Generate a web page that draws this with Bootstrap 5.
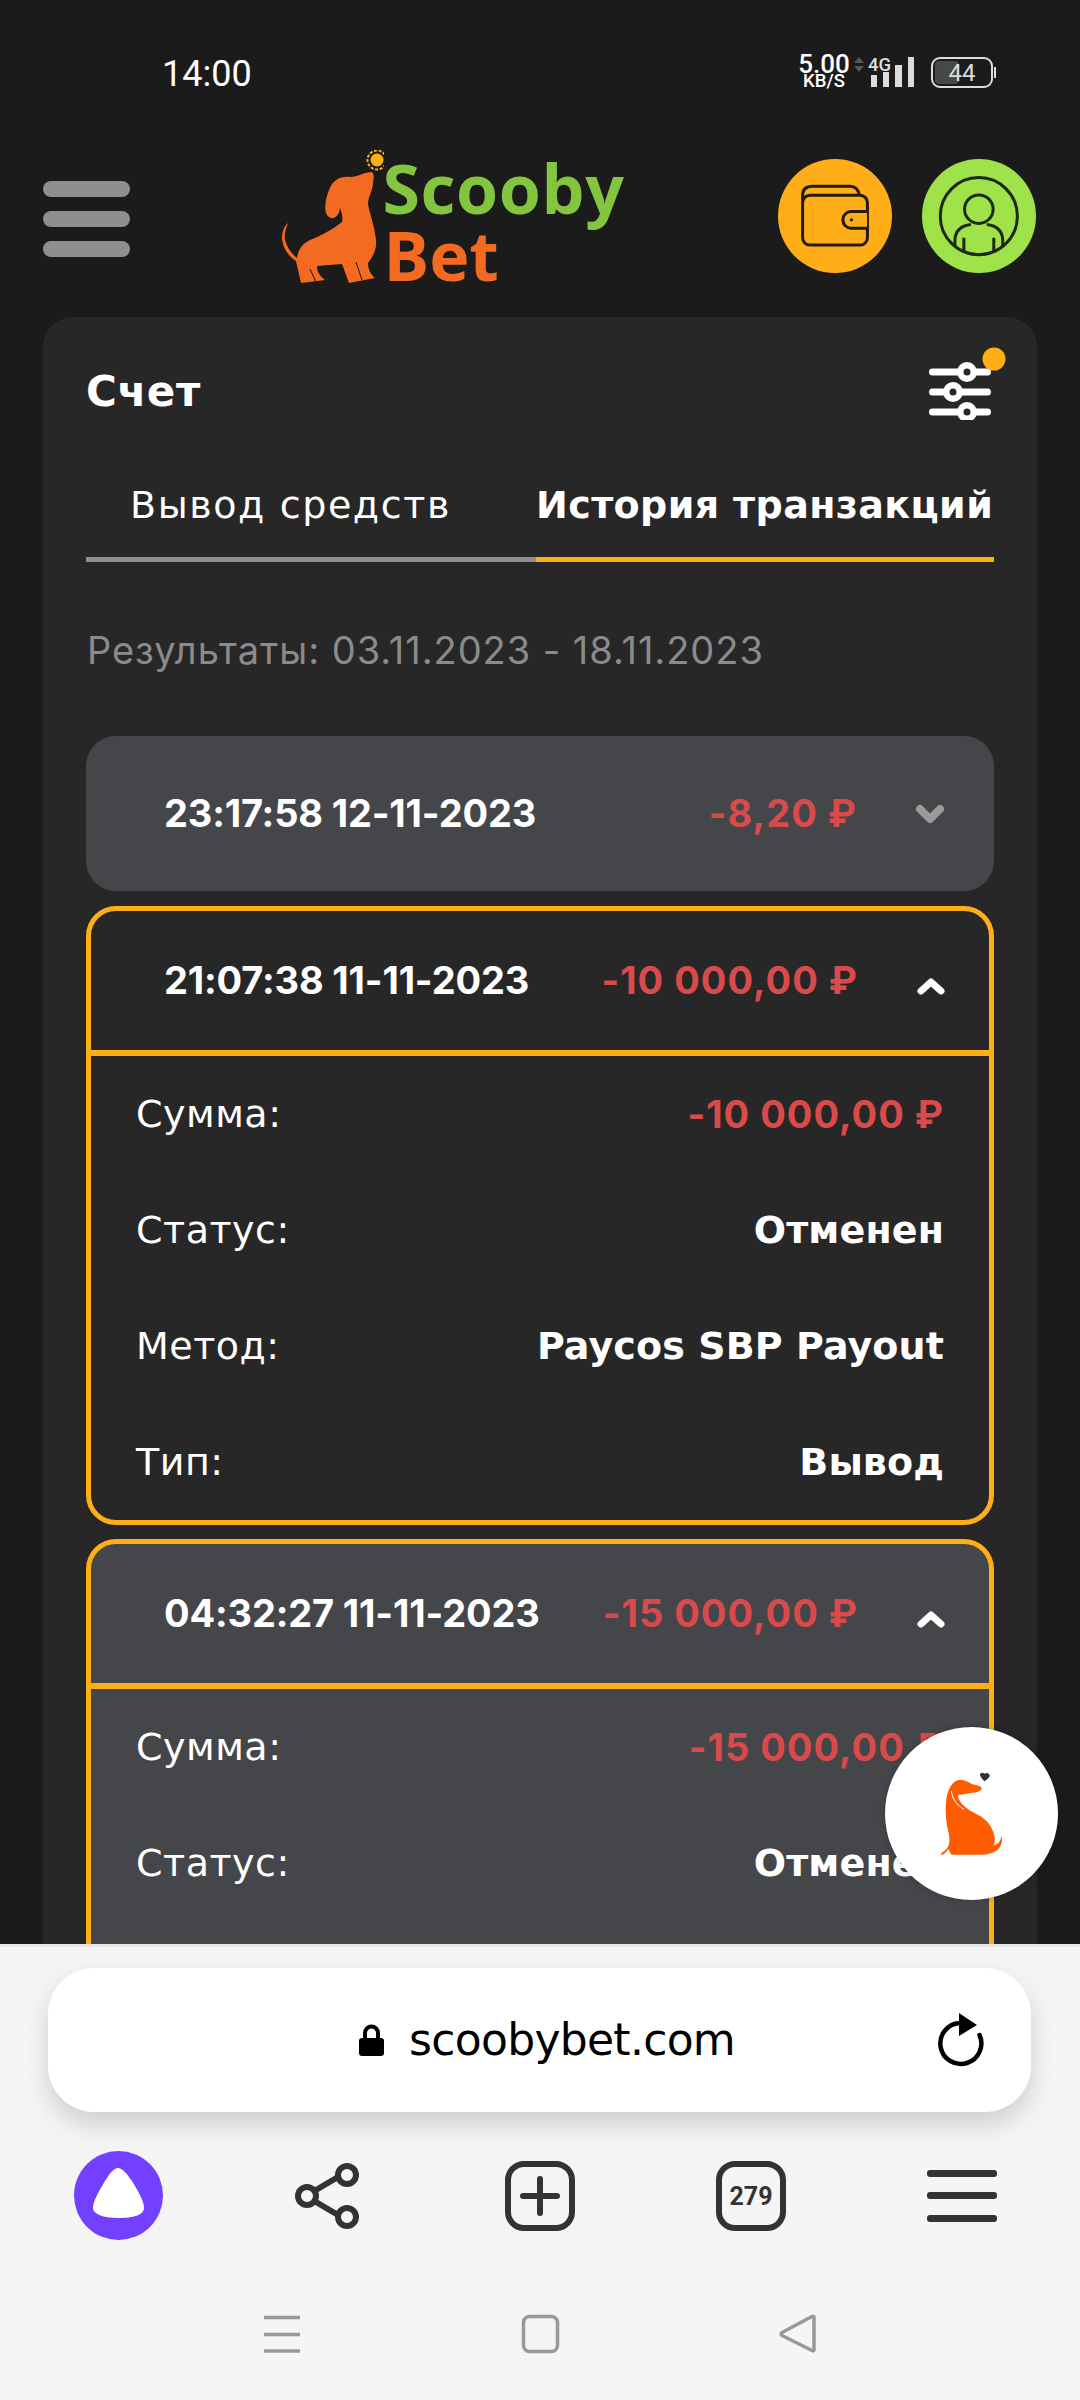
<!DOCTYPE html>
<html lang="ru">
<head>
<meta charset="utf-8">
<meta name="viewport" content="width=device-width, initial-scale=1">
<title>ScoobyBet</title>
<link href="https://cdn.jsdelivr.net/npm/bootstrap@5.3.0/dist/css/bootstrap.min.css" rel="stylesheet">
<style>
html,body{height:2400px;overflow:hidden}
body{background:#1b1b1b;color:#fff;font-family:"DejaVu Sans",sans-serif;width:1080px}
.phone-status{height:150px;padding:50px 84px 0 162px}
.clock{font:400 36px/32px Roboto,sans-serif;margin-top:8px}
.net{font-family:Roboto,sans-serif;line-height:1;width:54px;margin-top:5px}
.net b{display:block;font-size:26px;font-weight:500;line-height:19px}
.net span{display:block;font-size:18.500px;font-weight:500;line-height:14px}
.top-head{padding:0 44px 0 43px;height:134px;margin-bottom:33px}
.burger{width:87px;gap:14px;margin-top:3px}
.burger i{display:block;height:16px;border-radius:8px;background:#8f8f8f}
.logo-box{width:345px;height:134px}
.logo-words{margin:4px 0 0 -1px;font-family:"Open Sans",sans-serif;font-weight:700;font-size:68px;line-height:67px}
.logo-1{display:block;color:#84c53f;letter-spacing:.6px}
.logo-2{display:block;color:#f36a21;margin-left:1px}
.round-wrap{gap:30px;margin-top:-3px}
.round-btn{width:114px;height:114px;border-radius:50%}
.round-y{background:#ffae18}.round-g{background:#a0e24a}
.account{margin:0 43px;height:1627px;background:#272727;border:0;border-radius:30px 30px 0 0;padding:0 43px;overflow:hidden;color:#fff}
.account>*{flex:none}
.acc-title{height:150px}
.acc-title h1{font-size:42px;font-weight:700;letter-spacing:.6px;margin:0}
.filter-ico{margin:0 -12px 18px 0}
.tab-a,.tab-b{font-size:38px;line-height:44px;height:95px;padding-top:16px;border-bottom:5px solid #8f8f8f;white-space:nowrap}
.tab-a{width:450px;padding-left:44px;font-weight:400;letter-spacing:1.6px}
.tab-b{flex:1;font-weight:700;border-color:#ffae18;letter-spacing:.4px}
.results{color:#8b8b8b;font-family:Inter,sans-serif;font-size:38px;line-height:44px;margin:66px 0 64px 1px;letter-spacing:.95px;white-space:nowrap}
.tx{border-radius:30px;background:#45464a;margin-bottom:15px;border:0}
.tx-closed{height:155px}
.tx-open{border:5px solid #ffae18}
.tx-dark{background:#272727;margin-bottom:14px}
.tx-tail{height:120px}
.tx-head{padding:0 43px 0 73px;font-family:Inter,sans-serif;font-size:38px;font-weight:700;white-space:nowrap;letter-spacing:-.15px}
.tx-closed .tx-head{height:155px;padding:0 49px 0 78px}
.tx-open .tx-head{height:139px}
.tx-open .chev{margin-top:10px}
.tx-rule{height:6px;background:#ffae18}
.amt{color:#d94a4b;margin-left:auto;margin-right:58px;letter-spacing:1px}
.chev{width:30px;height:20px;flex:none}
.tx-row{height:116px;padding:0 45px 0 45px;font-size:38px;white-space:nowrap}
.lbl{letter-spacing:.5px}
.val{font-weight:700;letter-spacing:.1px}
.val.amt{margin:0;font-family:Inter,sans-serif;letter-spacing:1px}
.browser{height:456px;background:#f5f5f5;border-top:3px solid #e6e6e6}
.url-pill{margin:21px 49px 0 48px;height:144px;border-radius:46px;background:#fff;box-shadow:0 12px 26px rgba(0,0,0,.16);color:#000;padding:0 47px 0 311px}
.url-pill span{font:400 44px/1 "DejaVu Sans",sans-serif;letter-spacing:-.7px;margin-left:25px}
.b-tools{padding:39px 0 0 74px;gap:141px}
.b-share{margin-left:-12px}
.b-nav{padding-top:74px}
.chat-fab{position:absolute;left:885px;top:1727px;width:173px;height:173px;border-radius:50%;background:#fff;box-shadow:0 0 6px rgba(0,0,0,.2)}
.tab-count{font:700 25px/1 Roboto,sans-serif;fill:#333}
</style>
</head>
<body>
<div class="position-relative">
  <div class="phone-status d-flex justify-content-between">
    <div class="clock">14:00</div>
    <div class="d-flex align-items-start">
      <div class="net text-center"><b>5.00</b><span>KB/S</span></div>
      <svg width="145" height="40" viewBox="851 50 145 40">
        <path d="M854 63l5-6 5 6zM854 66l5 6 5-6z" fill="#555"/>
        <text x="868" y="71" font-family="Roboto,sans-serif" font-size="19" font-weight="500" fill="#ddd" textLength="23" lengthAdjust="spacingAndGlyphs">4G</text>
        <path d="M871 75h6v12h-6zM883 72h6v15h-6zM895 65h7v22h-7zM908 57h6v30h-6z" fill="#ddd"/>
        <rect x="932" y="58" width="60" height="29" rx="8" fill="none" stroke="#ddd" stroke-width="2"/>
        <rect x="935" y="61" width="24" height="23" rx="4" fill="#484848"/>
        <rect x="994" y="67" width="2" height="11" fill="#ddd"/>
        <text x="962" y="81" text-anchor="middle" font-family="Roboto,sans-serif" font-size="24" fill="#ddd">44</text>
      </svg>
    </div>
  </div>

  <header class="top-head d-flex justify-content-between align-items-center">
    <div class="burger d-flex flex-column"><i></i><i></i><i></i></div>
    <div class="logo-box d-flex align-items-start">
      <svg class="flex-shrink-0" width="102" height="134" viewBox="280 150 102 134">
        <circle cx="375" cy="160" r="9.500" fill="none" stroke="#ffae18" stroke-width="2" stroke-dasharray="3 1.6"/>
        <circle cx="375" cy="160" r="6.500" fill="#ffae18"/>
        <path fill="#f36a21" d="M370 172C362 172 356 177 348 177C338 176 331 180 327 190C323 200 322 210 325 215C328 220 335 219 337 212C338 209 338 208 338 208C340 213 341 218 340 222C330 230 318 236 308 240C300 244 296 250 295 258C290 254 285 248 283 240C282 234 284 228 286 223C282 226 280 232 280 239C281 248 286 256 294 261L299 283L323 280C318 276 315 272 315 266L340 264L347 283L373 278C368 274 366 268 366 263C372 255 375 248 374 240C373 228 368 215 366 204C366 197 371 190 371 183C372 178 372 174 370 172Z"/>
        <path fill="none" stroke="#1b1b1b" stroke-width="1" d="M308 269l6 13M354 262l6 18"/>
      </svg>
      <div class="logo-words"><span class="logo-1">Scooby</span><span class="logo-2">Bet</span></div>
    </div>
    <div class="round-wrap d-flex">
      <div class="round-btn round-y">
        <svg width="114" height="114" viewBox="54 355 343 343" fill="none" stroke="#241a08" stroke-width="9">
          <rect x="128" y="464" width="195" height="150" rx="22"/>
          <path d="M128 480v-15q0-28 30-28h112q25 0 29 28"/>
          <path d="M322 513h-48a25 25 0 0 0 0 50h48" fill="#ffae18"/>
          <circle cx="275" cy="538" r="5" fill="#241a08" stroke="none"/>
        </svg>
      </div>
      <div class="round-btn round-g">
        <svg width="114" height="114" viewBox="486 355 343 343" fill="none" stroke="#1b2a10" stroke-width="9">
          <circle cx="657" cy="527" r="116"/>
          <circle cx="657" cy="506" r="43"/>
          <path d="M585 620v-22q2-40 48-46M729 620v-22q-2-40-48-46"/>
          <path d="M612 592v44M702 592v44"/>
        </svg>
      </div>
    </div>
  </header>

  <main class="card account">
    <div class="acc-title d-flex flex-row justify-content-between align-items-center">
      <h1>Счет</h1>
      <svg width="82" height="74" viewBox="924 346 82 74" class="filter-ico">
        <path d="M932.500 372h55M932.500 392h55M932.500 412h55" stroke="#fff" stroke-width="7" stroke-linecap="round" fill="none"/>
        <g fill="#272727" stroke="#fff" stroke-width="6.500">
          <circle cx="967" cy="372" r="6.750"/><circle cx="953" cy="392" r="6.750"/><circle cx="967" cy="412" r="6.750"/>
        </g>
        <circle cx="994" cy="359" r="11.500" fill="#ffae18"/>
      </svg>
    </div>
    <div class="d-flex">
      <div class="tab-a">Вывод средств</div>
      <div class="tab-b">История транзакций</div>
    </div>
    <div class="results">Результаты: 03.11.2023 - 18.11.2023</div>

    <section class="tx tx-closed">
      <div class="tx-head d-flex align-items-center">
        <span>23:17:58 12-11-2023</span>
        <span class="amt">-8,20 ₽</span>
        <svg class="chev" viewBox="0 0 30 20"><path d="M5 5l10 10 10-10" fill="none" stroke="#9a9a9a" stroke-width="8" stroke-linecap="round" stroke-linejoin="round"/></svg>
      </div>
    </section>

    <section class="tx tx-open tx-dark">
      <div class="tx-head d-flex align-items-center">
        <span>21:07:38 11-11-2023</span>
        <span class="amt">-10 000,00 ₽</span>
        <svg class="chev" viewBox="0 0 30 20"><path d="M5 15l10-9 10 9" fill="none" stroke="#fff" stroke-width="7" stroke-linecap="round" stroke-linejoin="round"/></svg>
      </div>
      <div class="tx-rule"></div>
      <div class="tx-row d-flex justify-content-between align-items-center"><span class="lbl">Сумма:</span><span class="val amt">-10 000,00 ₽</span></div>
      <div class="tx-row d-flex justify-content-between align-items-center"><span class="lbl">Статус:</span><span class="val">Отменен</span></div>
      <div class="tx-row d-flex justify-content-between align-items-center"><span class="lbl">Метод:</span><span class="val">Paycos SBP Payout</span></div>
      <div class="tx-row d-flex justify-content-between align-items-center"><span class="lbl">Тип:</span><span class="val">Вывод</span></div>
    </section>

    <section class="tx tx-open">
      <div class="tx-head d-flex align-items-center">
        <span>04:32:27 11-11-2023</span>
        <span class="amt">-15 000,00 ₽</span>
        <svg class="chev" viewBox="0 0 30 20"><path d="M5 15l10-9 10 9" fill="none" stroke="#fff" stroke-width="7" stroke-linecap="round" stroke-linejoin="round"/></svg>
      </div>
      <div class="tx-rule"></div>
      <div class="tx-row d-flex justify-content-between align-items-center"><span class="lbl">Сумма:</span><span class="val amt">-15 000,00 ₽</span></div>
      <div class="tx-row d-flex justify-content-between align-items-center"><span class="lbl">Статус:</span><span class="val">Отменен</span></div>
      <div class="tx-tail"></div>
    </section>
  </main>

  <footer class="browser">
    <div class="url-pill d-flex align-items-center">
      <svg width="25" height="32" viewBox="0 0 25 32"><path d="M3 14h19a3 3 0 0 1 3 3v12a3 3 0 0 1-3 3H3a3 3 0 0 1-3-3V17a3 3 0 0 1 3-3z"/><path d="M6 15V9a6.500 6.500 0 0 1 13 0v6" fill="none" stroke="#000" stroke-width="4"/></svg>
      <span>scoobybet.com</span>
      <svg class="ms-auto" width="48" height="54" viewBox="936 2012 48 54" fill="none"><path d="M959.500 2022A20.500 20.500 0 1 0 979.500 2034" stroke="#000" stroke-width="4.500" stroke-linecap="round"/><path d="M959 2012l18 12-18 11z" fill="#000"/></svg>
    </div>
    <div class="b-tools d-flex align-items-center">
      <svg width="89" height="89" viewBox="0 0 89 89"><circle cx="44.500" cy="44.500" r="44.500" fill="#7340ff"/><path d="M44 17c-4 0-8 5-13 13-6 10-12 20-12 27 0 6 10 10 25 10s26-3 26-10c0-7-6-17-12-27-6-8-10-13-14-13z" fill="#fff"/></svg>
      <svg class="b-share" width="72" height="72" viewBox="292 2160 72 72" fill="none" stroke="#333" stroke-width="6"><path d="M316 2190l22-13M316 2202l22 13"/><circle cx="307" cy="2196" r="9"/><circle cx="347" cy="2175" r="9"/><circle cx="347" cy="2217" r="9"/></svg>
      <svg width="70" height="70" viewBox="0 0 70 70" fill="none" stroke="#333" stroke-width="6"><rect x="3" y="3" width="64" height="64" rx="16"/><path d="M35 18v34M18 35h34" stroke-linecap="round"/></svg>
      <svg width="70" height="70" viewBox="0 0 70 70" fill="none" stroke="#333" stroke-width="6"><rect x="3" y="3" width="64" height="64" rx="16"/><text x="35" y="44" text-anchor="middle" class="tab-count" stroke="none">279</text></svg>
      <svg width="70" height="52" viewBox="0 0 70 52" fill="#333"><rect y="0" width="70" height="7" rx="3"/><rect y="22" width="70" height="7" rx="3"/><rect y="45" width="70" height="7" rx="3"/></svg>
    </div>
    <div class="b-nav">
      <svg class="d-block" width="1080" height="40" viewBox="0 2314 1080 40" fill="none" stroke="#999" stroke-width="3.500">
        <path d="M264 2317.500h36M264 2334.500h36M264 2351h36"/>
        <rect x="523.500" y="2316.500" width="34" height="35" rx="6"/>
        <path d="M814 2317.500v32q0 2-2 1l-30-15q-2-2 0-3l30-16q2-1 2 1z" stroke-linejoin="round"/>
      </svg>
    </div>
  </footer>

  <div class="chat-fab">
    <svg width="173" height="173" viewBox="556 680 517 517">
      <path fill="#ff5c00" d="M722 1062c3-10 18-12 24-28 5-15 2-32-2-48-5-20-9-55-5-88 4-30 18-58 40-60 14-1 27 7 38 13 14 3 26 5 28 11 1 7-10 12-22 14l-36 6c-6 1-12 0-14 3 6 27 32 44 60 57 24 12 40 30 48 56 4 12 5 24 0 36 14-2 20-14 24-28 3 10 0 26-8 36-14 16-38 20-64 20h-78c-6-6-6-12-10-18-4 8-10 14-18 18z"/>
      <path fill="none" stroke="#fff" stroke-width="3" d="M754 872q6 36 38 54"/>
      <path fill="#333" d="M853 842c-8-8-13-14-13-19 0-6 8-9 13-3 5-5 16-2 16 5 0 6-8 12-16 17z"/>
    </svg>
  </div>
</div>
<script src="https://cdn.jsdelivr.net/npm/bootstrap@5.3.0/dist/js/bootstrap.bundle.min.js"></script>
</body>
</html>
